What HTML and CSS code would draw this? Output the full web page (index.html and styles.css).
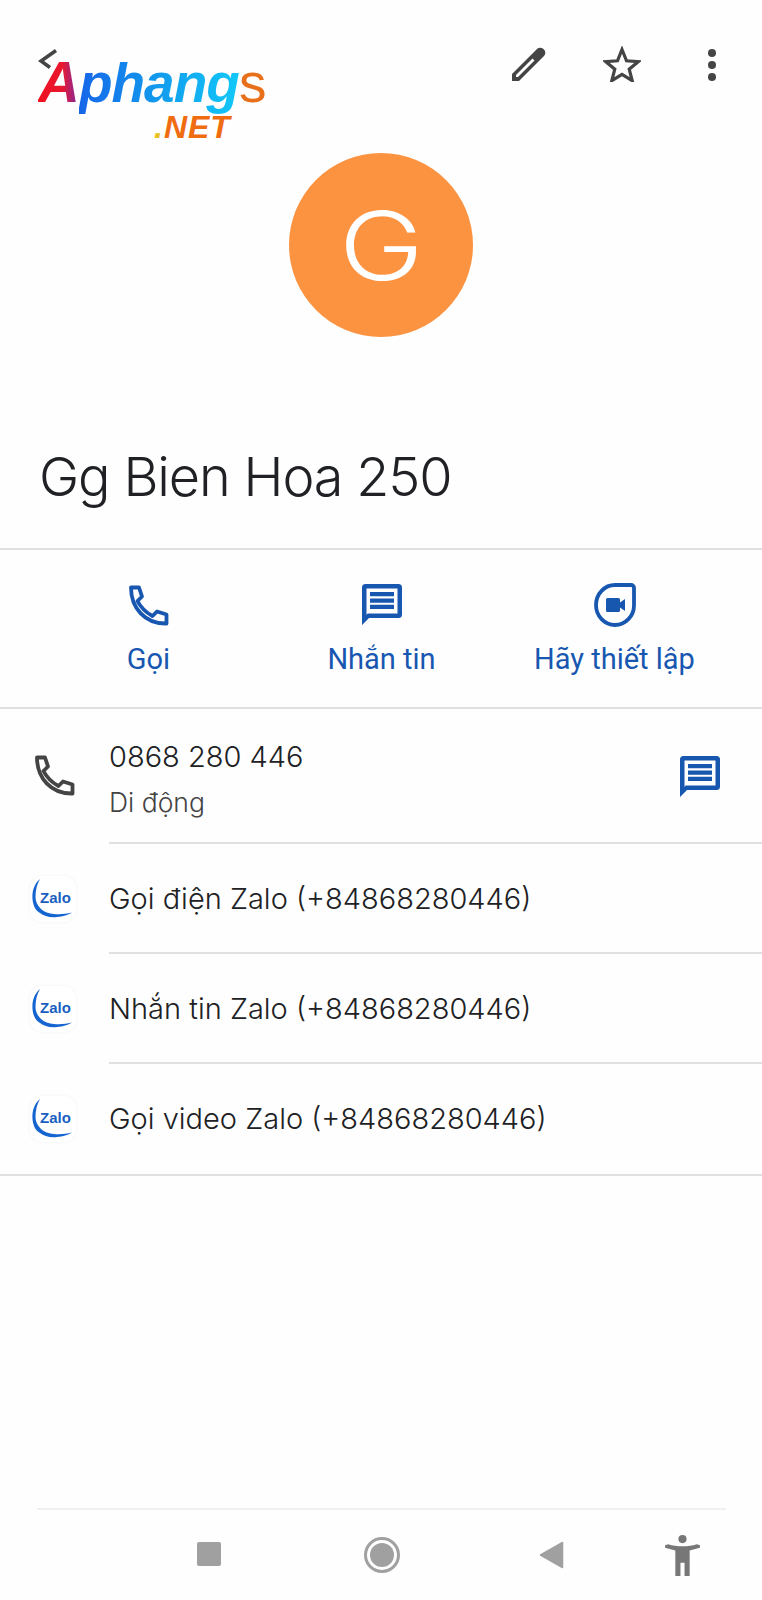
FILE: index.html
```html
<!DOCTYPE html>
<html lang="vi">
<head>
<meta charset="utf-8">
<title>Gg Bien Hoa 250</title>
<link rel="stylesheet" href="styles.css">
</head>
<body>
<div class="screen">
  <header class="toolbar">
    <svg class="icon-back" viewBox="0 0 20 20"><path d="M18 1.500 3 12l9 6.500" fill="none" stroke="#444" stroke-width="3.600"/></svg>
    <div class="tools">
      <svg class="tool-edit" viewBox="0 0 36 36"><path d="M1 35v-7L26 3a4.500 4.500 0 0 1 6.400 0l.6.6a4.500 4.500 0 0 1 0 6.400L8 35ZM5 31h2L23.500 14.500 21.500 12.500 5 29Z" fill="#444" fill-rule="evenodd"/></svg>
      <svg class="tool-star" viewBox="0 0 38 36"><path d="m19 3.500 4.500 11.300 12 .8-9.300 7.600 3 11.500L19 28.300 8.800 34.700l3-11.500-9.300-7.600 12-.8Z" fill="none" stroke="#444" stroke-width="3.200" stroke-linejoin="miter"/></svg>
      <div class="tool-more"><i></i><i></i><i></i></div>
    </div>
  </header>

  <div class="logo" aria-label="Aphangs.NET">
    <div class="logo-main"><span class="logo-a">A</span><span class="logo-b">phang</span><span class="logo-s">s</span></div>
    <div class="logo-net"><span class="logo-dot">.</span>NET</div>
  </div>

  <div class="avatar-wrap"><div class="avatar"><span class="avatar-letter">G</span></div></div>

  <h1 class="name">Gg Bien Hoa 250</h1>

  <section class="actions">
    <div class="action">
      <svg class="action-icon" viewBox="0 0 42 42"><path d="M3 3.500h8l3 9-4.500 4.500c3 6 8.500 11.500 15 15l4.500-4.500 9.500 3v9C17 40 3 24 3 3.500Z" fill="none" stroke="#1857b0" stroke-width="3.800" stroke-linejoin="round"/></svg>
      <span>Gọi</span>
    </div>
    <div class="action">
      <svg class="action-icon" viewBox="0 0 42 44"><path d="M1 42V4.500A3.500 3.500 0 0 1 4.500 1h33A3.500 3.500 0 0 1 41 4.500v27a3.500 3.500 0 0 1-3.500 3.500H8ZM5.500 32l1-1.500h30v-25h-31ZM9 9h24v4.300H9Zm0 6.400h24v4.300H9Zm0 6.400h24v4.300H9Z" fill="#1857b0" fill-rule="evenodd"/></svg>
      <span>Nhắn tin</span>
    </div>
    <div class="action">
      <svg class="action-icon" viewBox="0 0 42 44"><path d="M21 2h16a3 3 0 0 1 3 3v17.500C40 33 31.500 42 21 42S2 33 2 22 10.500 2 21 2Z" fill="none" stroke="#1857b0" stroke-width="3.800"/><path d="M12 16.500a1.500 1.500 0 0 1 1.500-1.500h11a1.500 1.500 0 0 1 1.500 1.500v3l5-3.500v12l-5-3.500v3a1.500 1.500 0 0 1-1.500 1.500h-11a1.500 1.500 0 0 1-1.500-1.500Z" fill="#1857b0"/></svg>
      <span>Hãy thiết lập</span>
    </div>
  </section>

  <section class="list">
    <div class="row row-tall">
      <svg class="row-icon phone-icon" viewBox="0 0 42 42"><path d="M3 3.500h8l3 9-4.500 4.500c3 6 8.500 11.500 15 15l4.500-4.500 9.500 3v9C17 40 3 24 3 3.500Z" fill="none" stroke="#444" stroke-width="3.800" stroke-linejoin="round"/></svg>
      <div class="row-body">
        <div class="row-title">0868 280 446</div>
        <div class="row-sub">Di động</div>
      </div>
      <svg class="row-msg" viewBox="0 0 42 44"><path d="M1 42V4.500A3.500 3.500 0 0 1 4.500 1h33A3.500 3.500 0 0 1 41 4.500v27a3.500 3.500 0 0 1-3.500 3.500H8ZM5.500 32l1-1.500h30v-25h-31ZM9 9h24v4.300H9Zm0 6.400h24v4.300H9Zm0 6.400h24v4.300H9Z" fill="#1857b0" fill-rule="evenodd"/></svg>
    </div>
    <div class="row">
      <div class="zalo"><svg viewBox="0 0 46 46"><path d="M10 3C4 8 2 15 2.500 23 3 30 6 35 10 37c4 3 10 5 17 4 6-.5 11-2 15-4.500-6 1.500-12 2-18 1.500-5-.5-10-2-13-5-4-4-5.500-8-5.500-12C5.500 14 7 8 10 3Z" fill="#1565d0"/></svg><span>Zalo</span></div>
      <div class="row-body"><div class="row-title">Gọi điện Zalo (+84868280446)</div></div>
    </div>
    <div class="row">
      <div class="zalo"><svg viewBox="0 0 46 46"><path d="M10 3C4 8 2 15 2.500 23 3 30 6 35 10 37c4 3 10 5 17 4 6-.5 11-2 15-4.500-6 1.500-12 2-18 1.500-5-.5-10-2-13-5-4-4-5.500-8-5.500-12C5.500 14 7 8 10 3Z" fill="#1565d0"/></svg><span>Zalo</span></div>
      <div class="row-body"><div class="row-title">Nhắn tin Zalo (+84868280446)</div></div>
    </div>
    <div class="row">
      <div class="zalo"><svg viewBox="0 0 46 46"><path d="M10 3C4 8 2 15 2.500 23 3 30 6 35 10 37c4 3 10 5 17 4 6-.5 11-2 15-4.500-6 1.500-12 2-18 1.500-5-.5-10-2-13-5-4-4-5.500-8-5.500-12C5.500 14 7 8 10 3Z" fill="#1565d0"/></svg><span>Zalo</span></div>
      <div class="row-body"><div class="row-title">Gọi video Zalo (+84868280446)</div></div>
    </div>
  </section>

  <div class="spacer"></div>

  <nav class="nav">
    <div class="nav-square"></div>
    <div class="nav-home"><i></i></div>
    <svg class="nav-back" viewBox="0 0 24 28"><path d="M23 1.500v25L1 14Z" fill="#a0a0a0" stroke="#a0a0a0" stroke-width="1.500" stroke-linejoin="round"/></svg>
    <svg class="nav-person" viewBox="0 0 36 40"><circle cx="18" cy="4" r="4" fill="#777"/><path d="M1 10 4 9c4 1.500 9 2 14 2s10-.5 14-2l3 1v2.500l-10 2.500V40h-5V27h-4v13h-5V15L1 12.500Z" fill="#777"/></svg>
  </nav>
</div>
</body>
</html>
```

FILE: styles.css
```css
* { box-sizing: border-box; }
html, body { margin: 0; padding: 0; background: #fefefe; }
body { font-family: Inter, Roboto, sans-serif; color: #202124; }
.screen { position: relative; width: 762px; height: 1600px; display: flex; flex-direction: column; overflow: hidden; }

.toolbar { height: 153px; position: relative; flex: none; }
.icon-back { position: absolute; left: 38px; top: 49px; width: 20px; height: 20px; }
.tools { display: flex; align-items: center; justify-content: flex-end; padding: 48px 46px 0 0; height: 82px; }
.tool-edit { width: 36px; height: 36px; margin-right: 56px; margin-top: -2px; }
.tool-star { width: 38px; height: 36px; margin-right: 67px; margin-top: -2px; }
.tool-more { display: flex; flex-direction: column; gap: 4px; width: 8px; }
.tool-more i { display: block; width: 8px; height: 8px; border-radius: 50%; background: #444; }

.logo { position: absolute; left: 38px; top: 54px; width: 228px; font-family: "Liberation Sans", sans-serif; font-weight: 700; font-style: italic; }
.logo-main { font-size: 55px; line-height: 56px; letter-spacing: -1px; white-space: nowrap; }
.logo-a { font-size: 58px; background: linear-gradient(90deg, #f01020 0%, #e81830 60%, #7a2aa8 100%); -webkit-background-clip: text; background-clip: text; color: transparent; }
.logo-b { background: linear-gradient(90deg, #1666e8 0%, #12a0ee 55%, #12c8f8 100%); -webkit-background-clip: text; background-clip: text; color: transparent; }
.logo-s { color: #e8701a; font-style: normal; font-weight: 400; }
.logo-net { margin: 1px 0 0 116px; font-size: 32px; line-height: 30px; letter-spacing: 1px; color: #ef6c10; white-space: nowrap; }
.logo-dot { color: #e8c020; }

.avatar-wrap { display: flex; justify-content: center; flex: none; height: 183px; }
.avatar { width: 184px; height: 184px; border-radius: 50%; background: #fc9341; color: #fff; font-size: 95px; font-weight: 300; line-height: 186px; text-align: center; }
.avatar-letter { display: inline-block; transform: scaleX(1.2); }

.name { margin: 0; flex: none; height: 214px; padding: 109px 0 0 39px; font-size: 54px; line-height: 64px; font-weight: 300; letter-spacing: -1.15px; color: #202124; border-bottom: 2px solid #dfe0e1; white-space: nowrap; }

.actions { flex: none; height: 159px; display: grid; grid-template-columns: repeat(3, 233px); padding-left: 32px; border-bottom: 2px solid #dfe0e1; }
.action { display: flex; flex-direction: column; align-items: center; padding-top: 33px; color: #1857b0; font-family: Roboto, sans-serif; font-size: 29px; line-height: 34px; }
.action-icon { width: 42px; height: 44px; margin-bottom: 15px; }
.action span { white-space: nowrap; }

.list { flex: none; border-bottom: 2px solid #dfe0e1; }
.row { display: flex; align-items: center; height: 110px; position: relative; padding-left: 30px; }
.row-tall { height: 135px; }
.row:not(:last-child)::after { content: ""; position: absolute; left: 109px; right: 0; bottom: 0; height: 2px; background: #dfe0e1; }
.row-icon { width: 42px; height: 42px; margin: -3px 0 0 4px; flex: none; }
.row-body { flex: 1; margin-left: 33px; }
.row-tall .row-body { padding-top: 6px; }
.row-title { font-size: 29px; font-weight: 300; line-height: 38px; color: #202124; white-space: nowrap; }
.row-sub { font-size: 26.5px; font-weight: 300; line-height: 38px; margin-top: 7px; color: #444; }
.row-msg { width: 42px; height: 44px; margin-right: 41px; flex: none; }
.zalo { position: relative; width: 46px; height: 46px; flex: none; border-radius: 12px; background: #fff; box-shadow: 0 0 3px rgba(0,0,0,.06); }
.zalo svg { display: block; width: 46px; height: 46px; }
.zalo span { position: absolute; left: 10px; top: 13px; font-size: 15px; line-height: 18px; font-weight: 700; color: #1a5fc0; font-family: "Liberation Sans", sans-serif; }

.spacer { flex: 1; }

.nav { flex: none; height: 92px; margin: 0 36px 0 37px; border-top: 2px solid #f0f0f0; position: relative; display: flex; align-items: center; padding: 0 0 0 160px; }
.nav-square { width: 24px; height: 24px; background: #a0a0a0; border-radius: 2px; margin-right: 143px; margin-bottom: 2px; }
.nav-home { width: 36px; height: 36px; border: 3px solid #a0a0a0; border-radius: 50%; padding: 3px; margin-right: 139px; }
.nav-home i { display: block; width: 24px; height: 24px; border-radius: 50%; background: #a0a0a0; }
.nav-back { width: 25px; height: 28px; margin-right: 100px; }
.nav-person { width: 37px; height: 41px; }
```
